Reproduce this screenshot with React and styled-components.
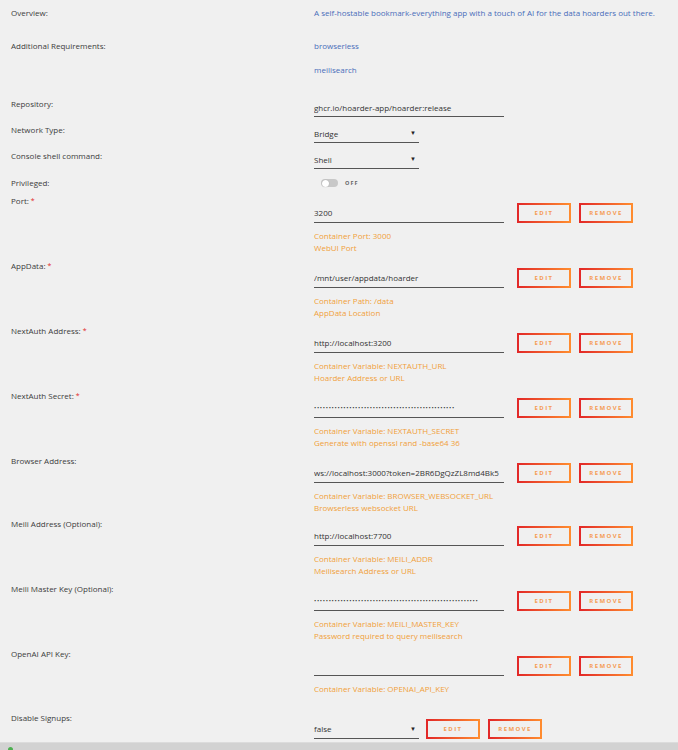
import styled, { createGlobalStyle } from 'styled-components'

const GlobalStyle = createGlobalStyle`
  html, body {
    margin: 0;
    padding: 0;
    background: #f0f0f0;
    overflow: hidden;
  }
  body {
    font-family: "Open Sans", "Noto Sans", sans-serif;
    font-size: 8px;
    color: #3c3c3c;
  }
`

const Page = styled.div`
  display: flex;
  flex-direction: column;
`

const Main = styled.div`
  height: 742px;
  overflow: hidden;
  padding: 7px 0 0 11px;
  box-sizing: border-box;
`

const Row = styled.div`
  display: flex;
  align-items: flex-start;
  margin-bottom: ${(p) => p.$gap || 0}px;
`

const Label = styled.div`
  width: 303px;
  flex-shrink: 0;
  line-height: 12px;
  color: #3c3c3c;
`

const Req = styled.span`
  color: #e22828;
  margin-left: 2px;
  font-size: 7px;
  vertical-align: 1px;
`

const Value = styled.div`
  display: flex;
  flex-direction: column;
  gap: ${(p) => p.$gap || 0}px;
  padding-top: ${(p) => p.$top || 0}px;
`

const Link = styled.a`
  color: #486dba;
  line-height: 12px;
  text-decoration: none;
`

const Controls = styled.div`
  display: flex;
  align-items: center;
`

const Field = styled.div`
  width: ${(p) => p.$w || 190}px;
  height: 18px;
  border-bottom: 1px solid #555;
  display: flex;
  align-items: center;
  justify-content: space-between;
  color: #333;
  white-space: nowrap;
  overflow: hidden;
`

const Dots = styled.span`
  font-size: 6px;
  letter-spacing: 0.68px;
  color: #3a3a3a;
`

const Arrow = styled.span`
  font-size: 6px;
  color: #222;
  margin-right: 3px;
`

const Button = styled.button`
  width: 54px;
  height: 20px;
  margin-left: ${(p) => p.$ml}px;
  padding: 0;
  background: transparent;
  border: 2px solid;
  border-image: linear-gradient(90deg, #e22828 0, #ff8c2f) 1;
  color: #f59c55;
  font-family: "Open Sans", "Noto Sans", sans-serif;
  font-size: 6px;
  font-weight: 700;
  letter-spacing: 1.4px;
  text-transform: uppercase;
  cursor: pointer;
`

const Desc = styled.div`
  margin-top: 7px;
  min-height: 24px;
  margin-bottom: ${(p) => p.$mb ?? 6}px;
  display: flex;
  flex-direction: column;
`

const DescLine = styled.div`
  color: #f0a03a;
  line-height: 12px;
`

const Toggle = styled.div`
  display: flex;
  align-items: center;
  gap: 7px;
  margin-left: 7px;
  height: 12px;
`

const Track = styled.div`
  width: 17px;
  height: 8px;
  border-radius: 4px;
  background: #c8c8c8;
  display: flex;
  align-items: center;
  padding: 0 1px;
  box-sizing: border-box;
`

const Knob = styled.div`
  width: 7px;
  height: 7px;
  border-radius: 50%;
  background: #fff;
  box-shadow: 0 0 1px rgba(0, 0, 0, 0.3);
`

const ToggleText = styled.span`
  font-size: 5.5px;
  font-weight: 700;
  letter-spacing: 1px;
  color: #666;
`

const Footer = styled.div`
  height: 30px;
  background: #d2d2d2;
  border-top: 1px solid #dcdcdc;
  display: flex;
  padding: 4px 8px 0;
  box-sizing: border-box;
`

const Led = styled.span`
  width: 5px;
  height: 5px;
  border-radius: 50%;
  background: #4caf50;
`

const configs = [
  { label: 'Port', req: true, value: '3200', desc: ['Container Port: 3000', 'WebUI Port'] },
  { label: 'AppData', req: true, value: '/mnt/user/appdata/hoarder', desc: ['Container Path: /data', 'AppData Location'] },
  { label: 'NextAuth Address', req: true, value: 'http://localhost:3200', desc: ['Container Variable: NEXTAUTH_URL', 'Hoarder Address or URL'] },
  { label: 'NextAuth Secret', req: true, secret: 48, desc: ['Container Variable: NEXTAUTH_SECRET', 'Generate with openssl rand -base64 36'] },
  { label: 'Browser Address', mb: 4, value: 'ws://localhost:3000?token=2BR6DgQzZL8md4Bk5', desc: ['Container Variable: BROWSER_WEBSOCKET_URL', 'Browserless websocket URL'] },
  { label: 'Meili Address (Optional)', value: 'http://localhost:7700', desc: ['Container Variable: MEILI_ADDR', 'Meilisearch Address or URL'] },
  { label: 'Meili Master Key (Optional)', secret: 56, desc: ['Container Variable: MEILI_MASTER_KEY', 'Password required to query meilisearch'] },
  { label: 'OpenAI API Key', mb: 5, value: '', desc: ['Container Variable: OPENAI_API_KEY'] },
]

const Select = ({ value, w }) => (
  <Field $w={w}>
    <span>{value}</span>
    <Arrow>▼</Arrow>
  </Field>
)

const ConfigRow = ({ item }) => (
  <Row>
    <Label>
      {item.label}:{item.req && <Req>*</Req>}
    </Label>
    <Value $top={8}>
      <Controls>
        <Field>
          {item.secret ? <Dots>{'•'.repeat(item.secret)}</Dots> : <span>{item.value}</span>}
        </Field>
        <Button $ml={13}>Edit</Button>
        <Button $ml={8}>Remove</Button>
      </Controls>
      <Desc $mb={item.mb}>
        {item.desc.map((d) => (
          <DescLine key={d}>{d}</DescLine>
        ))}
      </Desc>
    </Value>
  </Row>
)

const App = () => (
  <Page>
    <GlobalStyle />
    <Main>
      <Row $gap={21}>
        <Label>Overview:</Label>
        <Link>A self-hostable bookmark-everything app with a touch of AI for the data hoarders out there.</Link>
      </Row>
      <Row $gap={22}>
        <Label>Additional Requirements:</Label>
        <Value $gap={12}>
          <Link>browserless</Link>
          <Link>meilisearch</Link>
        </Value>
      </Row>
      <Row $gap={7}>
        <Label>Repository:</Label>
        <Field>ghcr.io/hoarder-app/hoarder:release</Field>
      </Row>
      <Row $gap={7}>
        <Label>Network Type:</Label>
        <Select value="Bridge" w={105} />
      </Row>
      <Row $gap={8}>
        <Label>Console shell command:</Label>
        <Select value="Shell" w={105} />
      </Row>
      <Row $gap={6}>
        <Label>Privileged:</Label>
        <Toggle>
          <Track>
            <Knob />
          </Track>
          <ToggleText>OFF</ToggleText>
        </Toggle>
      </Row>
      {configs.map((c) => (
        <ConfigRow key={c.label} item={c} />
      ))}
      <Row>
        <Label>Disable Signups:</Label>
        <Value $top={7}>
          <Controls>
            <Select value="false" w={105} />
            <Button $ml={7}>Edit</Button>
            <Button $ml={8}>Remove</Button>
          </Controls>
        </Value>
      </Row>
    </Main>
    <Footer>
      <Led />
    </Footer>
  </Page>
)

export default App
